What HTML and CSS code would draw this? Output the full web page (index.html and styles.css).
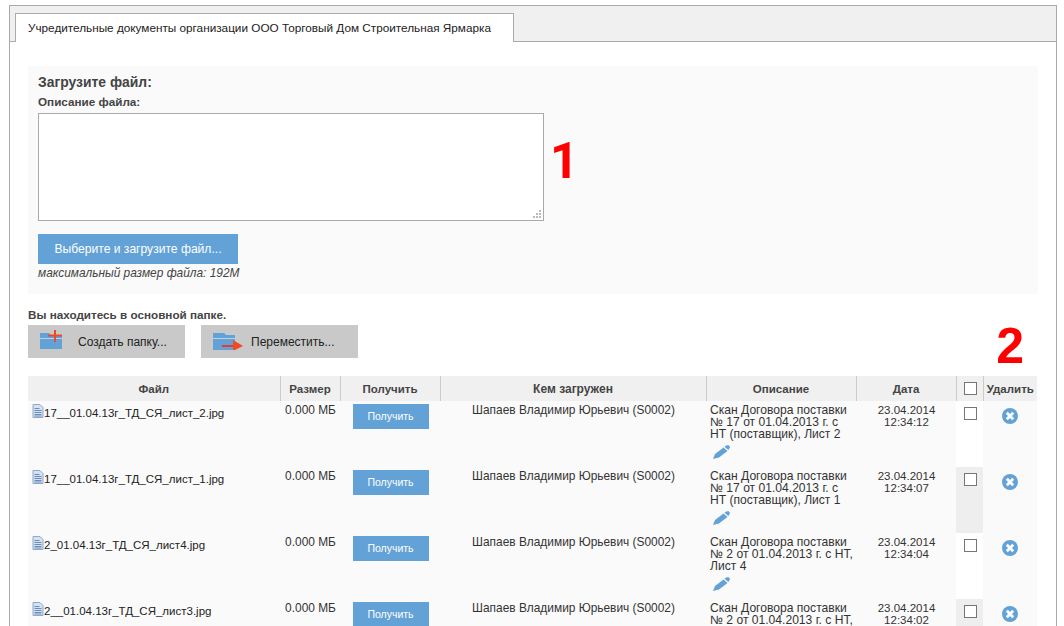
FILE: index.html
```html
<!DOCTYPE html>
<html lang="ru">
<head>
  <meta charset="UTF-8" />
  <title>Учредительные документы</title>
  <link rel="stylesheet" href="styles.css">
</head>
<body>
  <svg class="defs" width="0" height="0">
    <symbol id="file" viewBox="0 0 11 14">
      <path d="M.5.5h7l3 3v10H.5z" fill="#d5e1f0" stroke="#8fa9cc"/>
      <path d="M2 4.500h5M2 6.500h7M2 8.500h7M2 10.500h7M2 12h7" stroke="#6d8db8"/>
    </symbol>
    <symbol id="pen" viewBox="0 0 17 14">
      <path d="M0 14l2-5 8.500-6.500 4 3.500-8.500 6.500z" fill="#63a2d6"/>
      <path d="M11.500 1.700c1.500-1.200 3-1.700 4.500-1.200 1 .8 1.200 1.800.5 2.800l-1.200 1.800z" fill="#63a2d6"/>
    </symbol>
    <symbol id="del" viewBox="0 0 16 16">
      <circle cx="8" cy="8" r="8" fill="#63a2d6"/>
      <path d="M4.800 4.800l6.400 6.400M11.200 4.800l-6.400 6.400" stroke="#fff" stroke-width="2.800"/>
    </symbol>
  </svg>

  <div class="tabs">
    <div class="tabbar">
      <div class="tab">Учредительные документы организации ООО Торговый Дом Строительная Ярмарка</div>
    </div>

    <div class="content">
      <section class="upload">
        <h3>Загрузите файл:</h3>
        <label for="descr">Описание файла:</label>
        <div class="descr-wrap">
          <textarea id="descr"></textarea>
          <span class="grip"></span>
        </div>
        <button class="btn upload-btn" type="button">Выберите и загрузите файл...</button>
        <p class="maxsize">максимальный размер файла: 192M</p>
        <div class="mark mark-1">1</div>
      </section>

      <p class="where">Вы находитесь в основной папке.</p>
      <div class="folder-actions">
        <button class="folder-btn" type="button">
          <svg width="24" height="20" viewBox="0 0 24 20">
            <path d="M0 3h9l1.500 2H22v14H0z" fill="#63a2d6"/>
            <path d="M0 8.500h22" stroke="#b9d2e8"/>
            <path d="M8 5.500h14M15 0v12" stroke="#ee4a25" stroke-width="2"/>
          </svg>
          <span>Создать папку...</span>
        </button>
        <button class="folder-btn move" type="button">
          <svg width="32" height="20" viewBox="0 0 32 20">
            <path d="M0 3h11l2 2h9v15H0z" fill="#63a2d6"/>
            <path d="M0 8.500h22" stroke="#b9d2e8"/>
            <path d="M9 16h12" stroke="#ee3a25" stroke-width="2"/>
            <path d="M20 10l10 6-10 5z" fill="#ee4a25"/>
          </svg>
          <span>Переместить...</span>
        </button>
        <div class="mark mark-2">2</div>
      </div>

      <table class="files">
        <colgroup>
          <col class="c-file"><col class="c-size"><col class="c-get"><col class="c-user">
          <col class="c-descr"><col class="c-date"><col class="c-check"><col class="c-del">
        </colgroup>
        <thead>
          <tr>
            <th>Файл</th><th>Размер</th><th>Получить</th><th class="th-user">Кем загружен</th>
            <th>Описание</th><th>Дата</th><th class="th-check"><span class="check"></span></th><th>Удалить</th>
          </tr>
        </thead>
        <tbody>
          <tr>
            <td class="name"><svg class="ficon"><use href="#file"/></svg>17__01.04.13г_ТД_СЯ_лист_2.jpg</td>
            <td class="ctr wide">0.000 МБ</td>
            <td class="get-cell"><button class="btn get" type="button">Получить</button></td>
            <td class="ctr wide">Шапаев Владимир Юрьевич (S0002)</td>
            <td class="descr">Скан Договора поставки № 17 от 01.04.2013 г. с НТ (поставщик), Лист 2<svg class="pen"><use href="#pen"/></svg></td>
            <td class="ctr date">23.04.2014<br>12:34:12</td>
            <td class="chk"><span class="check"></span></td>
            <td class="rm"><svg class="del"><use href="#del"/></svg></td>
          </tr>
          <tr>
            <td class="name"><svg class="ficon"><use href="#file"/></svg>17__01.04.13г_ТД_СЯ_лист_1.jpg</td>
            <td class="ctr wide">0.000 МБ</td>
            <td class="get-cell"><button class="btn get" type="button">Получить</button></td>
            <td class="ctr wide">Шапаев Владимир Юрьевич (S0002)</td>
            <td class="descr">Скан Договора поставки № 17 от 01.04.2013 г. с НТ (поставщик), Лист 1<svg class="pen"><use href="#pen"/></svg></td>
            <td class="ctr date">23.04.2014<br>12:34:07</td>
            <td class="chk"><span class="check"></span></td>
            <td class="rm"><svg class="del"><use href="#del"/></svg></td>
          </tr>
          <tr>
            <td class="name"><svg class="ficon"><use href="#file"/></svg>2_01.04.13г_ТД_СЯ_лист4.jpg</td>
            <td class="ctr wide">0.000 МБ</td>
            <td class="get-cell"><button class="btn get" type="button">Получить</button></td>
            <td class="ctr wide">Шапаев Владимир Юрьевич (S0002)</td>
            <td class="descr">Скан Договора поставки № 2 от 01.04.2013 г. с НТ, Лист 4<svg class="pen"><use href="#pen"/></svg></td>
            <td class="ctr date">23.04.2014<br>12:34:04</td>
            <td class="chk"><span class="check"></span></td>
            <td class="rm"><svg class="del"><use href="#del"/></svg></td>
          </tr>
          <tr>
            <td class="name"><svg class="ficon"><use href="#file"/></svg>2__01.04.13г_ТД_СЯ_лист3.jpg</td>
            <td class="ctr wide">0.000 МБ</td>
            <td class="get-cell"><button class="btn get" type="button">Получить</button></td>
            <td class="ctr wide">Шапаев Владимир Юрьевич (S0002)</td>
            <td class="descr">Скан Договора поставки № 2 от 01.04.2013 г. с НТ, Лист 3<svg class="pen"><use href="#pen"/></svg></td>
            <td class="ctr date">23.04.2014<br>12:34:02</td>
            <td class="chk"><span class="check"></span></td>
            <td class="rm"><svg class="del"><use href="#del"/></svg></td>
          </tr>
        </tbody>
      </table>
    </div>
  </div>
</body>
</html>
```

FILE: styles.css
```css
html, body {
  height: 626px;
  overflow: hidden;
}
body {
  margin: 0;
  padding: 5px 7px 0 9px;
  font-family: "Liberation Sans", Arial, sans-serif;
  font-size: 11.500px;
  color: #333;
  background: #fff;
}
.defs {
  position: absolute;
}
.tabs {
  border: 1px solid #aaa;
  border-width: 1px 1px 0 1px;
  height: 700px;
}
.tabbar {
  box-sizing: border-box;
  height: 36px;
  padding: 7px 0 0 5px;
  background: #f0f0f0;
  border-bottom: 1px solid #aaa;
}
.tab {
  display: inline-block;
  box-sizing: border-box;
  height: 29px;
  padding: 7px 22px 0 12px;
  background: #fff;
  border: 1px solid #aaa;
  border-bottom: none;
  font-size: 11.750px;
  color: #222;
}
.content {
  padding: 24px 18px 0 18px;
}
.upload {
  position: relative;
  box-sizing: border-box;
  height: 228px;
  padding: 8px 10px 0 10px;
  background: #fafafa;
}
.upload h3 {
  margin: 0;
  font-size: 13.900px;
  line-height: 16px;
  color: #444;
}
.upload label {
  display: block;
  margin-top: 4px;
  font-size: 11.700px;
  line-height: 15px;
  font-weight: bold;
  color: #444;
}
.descr-wrap {
  position: relative;
  width: 506px;
  height: 108px;
  margin-top: 4px;
}
.descr-wrap textarea {
  display: block;
  box-sizing: border-box;
  width: 100%;
  height: 100%;
  margin: 0;
  border: 1px solid #aaa;
  background: #fff;
  resize: none;
  outline: none;
}
.grip {
  position: absolute;
  right: 3px;
  bottom: 3px;
  width: 8px;
  height: 8px;
  background:
    linear-gradient(#bbb, #bbb) 6px 0 / 2px 2px no-repeat,
    linear-gradient(#bbb, #bbb) 3px 3px / 2px 2px no-repeat,
    linear-gradient(#bbb, #bbb) 6px 3px / 2px 2px no-repeat,
    linear-gradient(#bbb, #bbb) 0 6px / 2px 2px no-repeat,
    linear-gradient(#bbb, #bbb) 3px 6px / 2px 2px no-repeat,
    linear-gradient(#bbb, #bbb) 6px 6px / 2px 2px no-repeat;
}
.btn {
  border: none;
  background: #63a2d6;
  color: #fff;
  font-family: inherit;
  padding: 0;
}
.upload-btn {
  display: block;
  width: 200px;
  height: 30px;
  margin-top: 13px;
  font-size: 12.100px;
}
.maxsize {
  margin: 2px 0 0;
  font-size: 11.900px;
  line-height: 15px;
  font-style: italic;
  color: #444;
}
.mark {
  position: absolute;
  font-size: 50px;
  line-height: 50px;
  font-weight: bold;
  color: #f00;
}
.mark-1 {
  left: 522px;
  top: 70px;
  font-family: Roboto, sans-serif;
}
.mark-2 {
  right: 14px;
  top: -4px;
}
.where {
  margin: 14px 0 0;
  font-size: 11.700px;
  line-height: 14px;
  font-weight: bold;
  color: #444;
}
.folder-actions {
  position: relative;
  display: flex;
  gap: 16px;
  margin-top: 3px;
}
.folder-btn {
  display: flex;
  align-items: center;
  width: 157px;
  height: 33px;
  padding: 0 0 0 12px;
  border: none;
  background: #c9c9c9;
  font-family: inherit;
  font-size: 12px;
  color: #222;
}
.folder-btn svg {
  margin-bottom: 3px;
}
.folder-btn span {
  margin-left: 14px;
}
.folder-btn.move span {
  margin-left: 6px;
}
.files {
  width: 1009px;
  margin-top: 18px;
  border-collapse: collapse;
  table-layout: fixed;
}
.c-file { width: 252px; }
.c-size { width: 60px; }
.c-get { width: 100px; }
.c-user { width: 266px; }
.c-descr { width: 150px; }
.c-date { width: 100px; }
.c-check { width: 27px; }
.c-del { width: 54px; }
.files th {
  height: 25px;
  padding: 0;
  background: #f0f0f0;
  border-right: 1px solid #ccc;
  font-size: 11.500px;
  color: #444;
}
.files th:last-child {
  border-right: none;
}
.files .th-user {
  font-size: 12px;
}
.files .th-check {
  padding-left: 2px;
}
.files tr {
  height: 66px;
}
.files thead tr {
  height: 25px;
}
.files td {
  box-sizing: border-box;
  height: 66px;
  padding: 0;
  vertical-align: top;
  background: #fafafa;
  color: #333;
}
.files .name {
  padding: 3px 0 0 4px;
  color: #222;
  line-height: 19px;
}
.ficon {
  width: 12px;
  height: 14px;
  vertical-align: top;
}
.files .ctr {
  padding: 2px 0 0 1px;
  text-align: center;
  line-height: 15px;
}
.files .wide {
  font-size: 11.900px;
}
.files .date {
  padding-top: 3px;
  line-height: 12px;
}
.files .get-cell {
  padding: 3px 0 0 13px;
}
.get {
  display: block;
  width: 76px;
  height: 25px;
  padding: 0 1px 1px 0;
  font-size: 10.500px;
}
.files .descr {
  padding: 3px 1px 0 4px;
  font-size: 12.100px;
  line-height: 12px;
}
.pen {
  display: block;
  width: 17px;
  height: 14px;
  margin: 5px 0 0 3px;
}
.check {
  display: inline-block;
  box-sizing: border-box;
  width: 13px;
  height: 13px;
  border: 1px solid #767676;
  background: #fff;
  vertical-align: middle;
}
.files .chk {
  padding: 6px 0 0 2px;
  text-align: center;
  background: #fff;
}
.files tbody tr:nth-child(even) .chk {
  background: #eee;
}
.files .rm {
  padding-top: 7px;
  text-align: center;
}
.del {
  width: 16px;
  height: 16px;
}
```
